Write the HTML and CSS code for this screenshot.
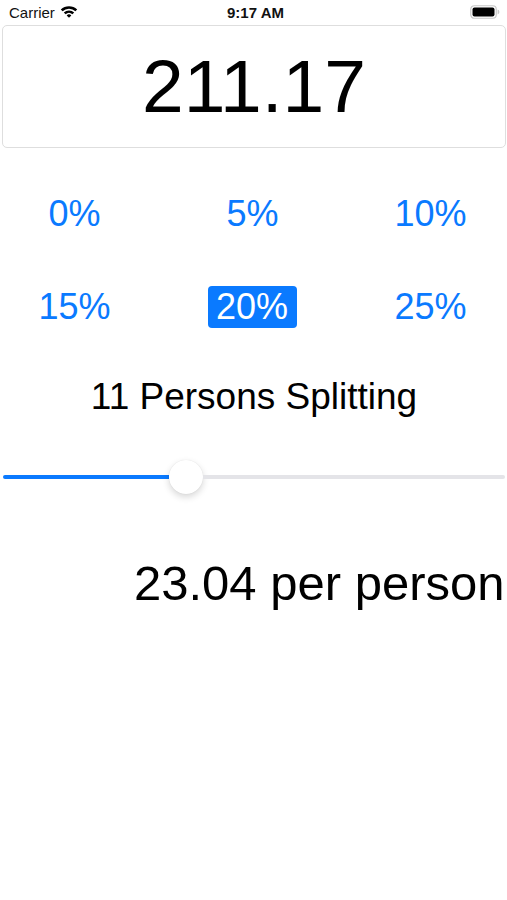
FILE: index.html
```html
<!DOCTYPE html>
<html lang="en">
<head>
<meta charset="utf-8">
<title>Tip Split</title>
<link rel="stylesheet" href="styles.css">
</head>
<body>
<div class="screen">
  <header class="status-bar">
    <div class="status-left">
      <span class="carrier">Carrier</span>
      <svg class="wifi" width="18" height="13" viewBox="0 0 18 13">
        <path d="M0.8 4.5 A11.8 11.8 0 0 1 17.2 4.5 L15.4 6.3 A9.2 9.2 0 0 0 2.6 6.3 Z" fill="#000"/>
        <path d="M3.8 7.5 A7.5 7.5 0 0 1 14.2 7.5 L12.4 9.3 A5 5 0 0 0 5.6 9.3 Z" fill="#000"/>
        <path d="M6.7 10.4 A3.3 3.3 0 0 1 11.3 10.4 L9 12.7 Z" fill="#000"/>
      </svg>
    </div>
    <div class="status-time">9:17 AM</div>
    <div class="status-right">
      <svg class="battery" width="30" height="14" viewBox="0 0 30 14">
        <rect x="0.75" y="0.75" width="25.5" height="12.5" rx="3.5" fill="none" stroke="#c8c8c8" stroke-width="1.2"/>
        <rect x="2.5" y="2.5" width="22" height="9" rx="2" fill="#000"/>
        <path d="M27.6 4.6 Q29.4 5 29.4 7 Q29.4 9 27.6 9.4 Z" fill="#c8c8c8"/>
      </svg>
    </div>
  </header>

  <div class="bill-field">211.17</div>

  <div class="tip-grid">
    <div class="tip-cell"><span class="tip">0%</span></div>
    <div class="tip-cell"><span class="tip">5%</span></div>
    <div class="tip-cell"><span class="tip">10%</span></div>
    <div class="tip-cell"><span class="tip">15%</span></div>
    <div class="tip-cell"><span class="tip tip-selected">20%</span></div>
    <div class="tip-cell"><span class="tip">25%</span></div>
  </div>

  <div class="split-label">11 Persons Splitting</div>

  <div class="slider">
    <div class="slider-fill"></div>
    <div class="slider-thumb"></div>
    <div class="slider-rest"></div>
  </div>

  <div class="result">23.04 per person</div>
</div>
</body>
</html>
```

FILE: styles.css
```css
html, body {
  margin: 0;
  padding: 0;
  background: #ffffff;
}

body {
  font-family: "Liberation Sans", Arial, Helvetica, sans-serif;
  color: #000;
}

.screen {
  width: 507px;
  height: 900px;
  overflow: hidden;
}

.status-bar {
  height: 25px;
  display: grid;
  grid-template-columns: 1fr auto 1fr;
  align-items: center;
  padding: 0 7px 0 9px;
  box-sizing: border-box;
}

.status-left {
  display: flex;
  align-items: center;
  gap: 5px;
}

.carrier {
  font-size: 15px;
  line-height: 18px;
  color: #111;
}

.wifi {
  display: block;
  margin-top: -2px;
}

.status-time {
  font-size: 15px;
  font-weight: bold;
  line-height: 18px;
  color: #111;
  padding-left: 2px;
}

.status-right {
  display: flex;
  justify-content: flex-end;
}

.battery {
  display: block;
  margin-top: -1px;
}

.bill-field {
  margin: 0 1px 0 2px;
  height: 119px;
  border: 1px solid #dedede;
  border-radius: 5px;
  display: flex;
  align-items: center;
  justify-content: center;
  font-size: 75px;
  line-height: 84px;
  color: #000;
  padding-bottom: 2px;
  box-sizing: content-box;
}

.tip-grid {
  margin-top: 45px;
  display: grid;
  grid-template-columns: repeat(3, 149px);
  column-gap: 29px;
  row-gap: 51px;
}

.tip-cell {
  display: flex;
  justify-content: center;
  height: 42px;
}

.tip {
  font-size: 36px;
  line-height: 42px;
  color: #0a7aff;
  padding: 0 8px;
  border-radius: 4px;
}

.tip-selected {
  background: #0a7aff;
  color: #ffffff;
  padding: 0 9px 0 8px;
}

.split-label {
  margin-top: 48px;
  font-size: 37px;
  line-height: 42px;
  text-align: center;
  padding-left: 1px;
}

.slider {
  margin: 42px 2px 0 3px;
  height: 34px;
  display: flex;
  align-items: center;
}

.slider-fill {
  width: 166px;
  height: 4px;
  background: #0a7aff;
  border-radius: 2px 0 0 2px;
}

.slider-thumb {
  width: 34px;
  height: 34px;
  border-radius: 50%;
  background: #fff;
  box-shadow: 0 3px 7px rgba(0, 0, 0, 0.16), 0 0 1px rgba(0, 0, 0, 0.12);
  flex: none;
}

.slider-rest {
  flex: 1;
  height: 4px;
  background: #e4e4e8;
  border-radius: 0 2px 2px 0;
}

.result {
  margin-top: 61px;
  padding-left: 134px;
  font-size: 49px;
  line-height: 56px;
  white-space: nowrap;
}
```
